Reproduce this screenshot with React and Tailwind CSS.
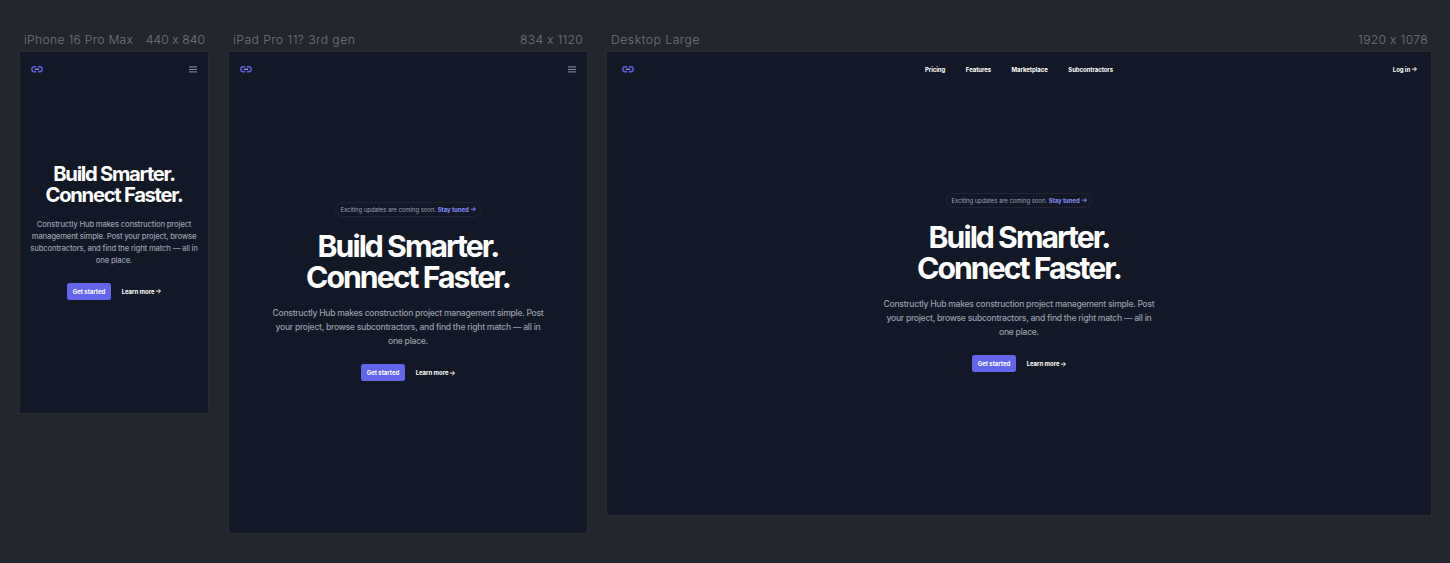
import React from 'react';

const Logo = () => (
  <svg className="block h-[7px] w-[12px]" viewBox="0 0 12 7" fill="none" strokeWidth="1.4">
    <path d="M5.2 0.8H3.3a2.5 2.5 0 0 0 0 5h1.9M6.8 0.8h1.9a2.5 2.5 0 0 1 0 5H6.8" stroke="#5d5fe0" />
    <path d="M3.8 3.3h4.4" stroke="#8e91d8" />
  </svg>
);

const Menu = () => (
  <svg className="block h-[7px] w-2" viewBox="0 0 8 7" stroke="#8f949e" strokeWidth="1">
    <path d="M0 0.9h8M0 3.4h8M0 5.9h8" />
  </svg>
);

const Arrow = () => (
  <svg className="ml-[1.9px] inline-block h-[5px] w-[5px] align-[-0.3px]" viewBox="0 0 5 5" fill="none" stroke="currentColor" strokeWidth="1">
    <path d="M0 2.1h4.4M2.4 0l2.1 2.1-2.1 2.1" />
  </svg>
);

const NavLink = ({ children }) => <span className="text-[6.01px] leading-[10px] font-bold tracking-[-0.06px] whitespace-nowrap">{children}</span>;

function Hero({ compact }) {
  return (
    <main className="flex flex-col items-center text-center">
      {!compact && (
        <div className="mb-[14px] flex h-[14.6px] w-[146.4px] items-center justify-center rounded-full border border-[#1f2533] text-[6.01px] tracking-[-0.055px] whitespace-nowrap text-[#9ca3af]">
          <span>
            Exciting updates are coming soon. <span className="font-bold tracking-[-0.06px] text-[#818cf8]">Stay tuned<Arrow /></span>
          </span>
        </div>
      )}
      <h1 className={compact ? 'text-[20.2px] leading-[20.9px] font-bold tracking-[-0.063em] whitespace-nowrap' : 'text-[30.2px] leading-[30.9px] font-bold tracking-[-0.065em] whitespace-nowrap'}>
        Build Smarter.<br />Connect Faster.
      </h1>
      <p className={compact ? 'mt-[13.2px] text-[7.73px] leading-[12.02px] font-medium tracking-[-0.2px] whitespace-nowrap text-[#979eaa]' : 'mt-[14.4px] text-[8.59px] leading-[13.74px] font-medium tracking-[-0.27px] whitespace-nowrap text-[#979eaa]'}>
        {compact ? (
          <>Constructly Hub makes construction project<br />management simple. Post your project, browse<br />subcontractors, and find the right match — all in<br />one place.</>
        ) : (
          <>Constructly Hub makes construction project management simple. Post<br />your project, browse subcontractors, and find the right match — all in<br />one place.</>
        )}
      </p>
      <div className={compact ? 'mt-[15.7px] flex items-center gap-[10.3px] text-[6.01px] font-bold tracking-[-0.04px] whitespace-nowrap' : 'mt-[16px] flex items-center gap-[10.3px] text-[6.01px] font-bold tracking-[-0.04px] whitespace-nowrap'}>
        <button className="flex h-[17px] w-[44.7px] items-center justify-center rounded-[2.5px] bg-[#6366ea]">Get started</button>
        <span>Learn more<Arrow /></span>
      </div>
    </main>
  );
}

function Artboard({ name, size, width, height, top, labelPad, nameTracking, sizeTracking, navPad, kind }) {
  return (
    <section className="shrink-0" style={{ width }}>
      <div className={`flex h-5 justify-between text-[12.2px] leading-[16px] font-light whitespace-nowrap text-[#777481] ${labelPad}`}>
        <span className={nameTracking}>{name}</span>
        <span className={sizeTracking}>{size}</span>
      </div>
      <div className="bg-[#121825] text-white outline outline-[#292b33]" style={{ height }}>
        <header className={`flex h-[34.5px] items-center justify-between ${navPad}`}>
          <div className={kind === 'desktop' ? 'flex flex-1' : 'flex'}><Logo /></div>
          {kind === 'desktop' ? (
            <>
              <nav className="flex gap-[20.6px] pt-px pr-px">
                <NavLink>Pricing</NavLink>
                <NavLink>Features</NavLink>
                <NavLink>Marketplace</NavLink>
                <NavLink>Subcontractors</NavLink>
              </nav>
              <div className="flex flex-1 justify-end pt-px"><NavLink>Log in<Arrow /></NavLink></div>
            </>
          ) : <Menu />}
        </header>
        <div style={{ paddingTop: top }}><Hero compact={kind === 'phone'} /></div>
      </div>
    </section>
  );
}

export default function App() {
  return (
    <div className="flex h-[563px] w-[1450px] items-start overflow-hidden bg-[#24262d] pt-8 pl-5 font-['Inter',sans-serif]">
      <div className="mr-[21px] flex">
        <Artboard name="iPhone 16 Pro Max" size="440 x 840" width={188} height={361} top={77.9} kind="phone" labelPad="pl-1 pr-[3px]" nameTracking="tracking-[0.27px]" sizeTracking="tracking-[0.05px]" navPad="pl-[11px] pr-[11.5px]" />
      </div>
      <div className="flex gap-5">
        <Artboard name="iPad Pro 11? 3rd gen" size="834 x 1120" width={358} height={481} top={115.9} kind="tablet" labelPad="pl-1 pr-1" nameTracking="tracking-[0.44px]" sizeTracking="tracking-[0.25px]" navPad="pl-[11px] pr-[11.5px]" />
        <Artboard name="Desktop Large" size="1920 x 1078" width={824} height={463} top={106.8} kind="desktop" labelPad="pl-1 pr-[3px]" nameTracking="tracking-[0.52px]" sizeTracking="tracking-[0.3px]" navPad="pl-[15px] pr-[14px]" />
      </div>
    </div>
  );
}
